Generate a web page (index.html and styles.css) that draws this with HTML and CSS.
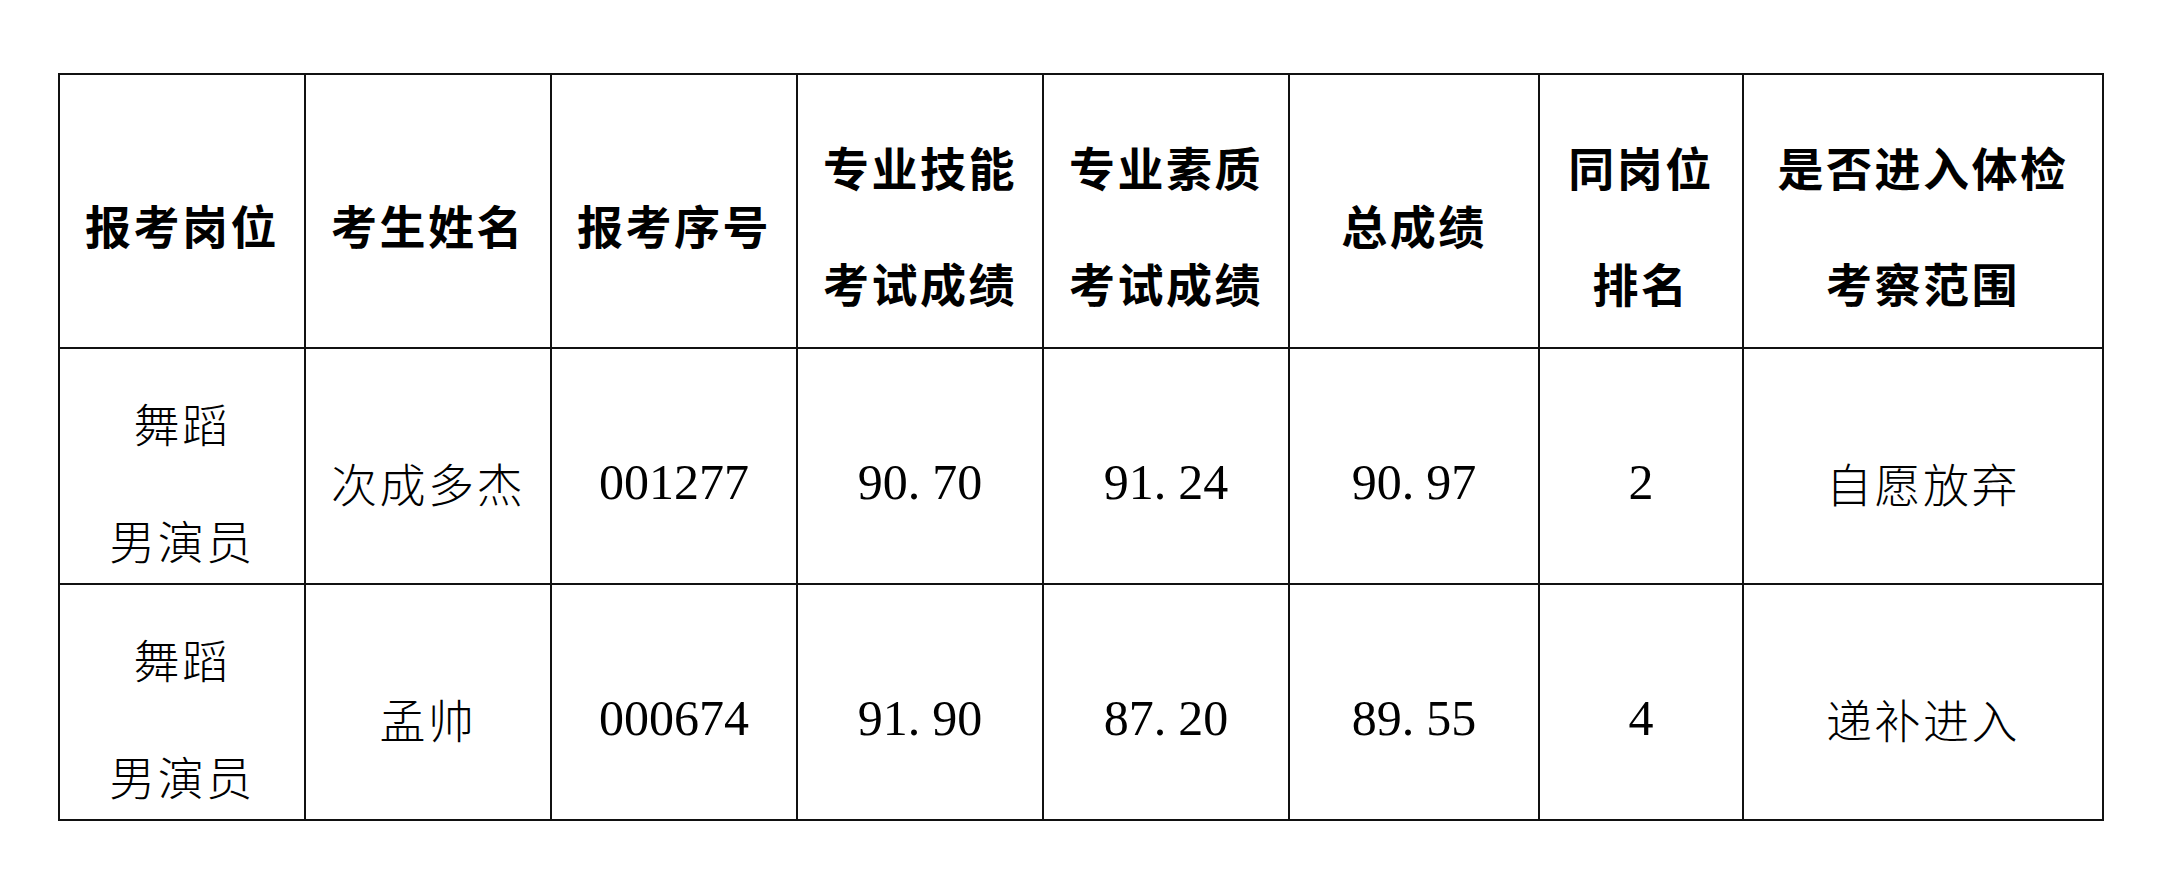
FILE: index.html
```html
<!DOCTYPE html>
<html lang="zh-CN">
<head>
<meta charset="utf-8">
<title>成绩表</title>
<link rel="stylesheet" href="styles.css">
</head>
<body>
<table class="score">
  <colgroup>
    <col class="c1"><col class="c2"><col class="c3"><col class="c4"><col class="c5"><col class="c6"><col class="c7"><col class="c8">
  </colgroup>
  <thead>
    <tr class="head">
      <th><div class="ln">报考岗位</div></th>
      <th><div class="ln">考生姓名</div></th>
      <th><div class="ln">报考序号</div></th>
      <th><div class="ln">专业技能</div><div class="ln">考试成绩</div></th>
      <th><div class="ln">专业素质</div><div class="ln">考试成绩</div></th>
      <th><div class="ln">总成绩</div></th>
      <th><div class="ln">同岗位</div><div class="ln">排名</div></th>
      <th><div class="ln">是否进入体检</div><div class="ln">考察范围</div></th>
    </tr>
  </thead>
  <tbody>
    <tr class="row">
      <td><div class="ln">舞蹈</div><div class="ln">男演员</div></td>
      <td class="one"><div class="ln">次成多杰</div></td>
      <td class="num"><div class="ln">001277</div></td>
      <td class="num"><div class="ln">90<span class="pt">.</span>70</div></td>
      <td class="num"><div class="ln">91<span class="pt">.</span>24</div></td>
      <td class="num"><div class="ln">90<span class="pt">.</span>97</div></td>
      <td class="num"><div class="ln">2</div></td>
      <td class="one"><div class="ln">自愿放弃</div></td>
    </tr>
    <tr class="row">
      <td><div class="ln">舞蹈</div><div class="ln">男演员</div></td>
      <td class="one"><div class="ln">孟帅</div></td>
      <td class="num"><div class="ln">000674</div></td>
      <td class="num"><div class="ln">91<span class="pt">.</span>90</div></td>
      <td class="num"><div class="ln">87<span class="pt">.</span>20</div></td>
      <td class="num"><div class="ln">89<span class="pt">.</span>55</div></td>
      <td class="num"><div class="ln">4</div></td>
      <td class="one"><div class="ln">递补进入</div></td>
    </tr>
  </tbody>
</table>
</body>
</html>
```

FILE: styles.css
```css
html, body {
  margin: 0;
  padding: 0;
  background: #ffffff;
}

body {
  padding: 73px 0 0 58px;
  color: #000000;
  font-family: "Noto Sans CJK SC", "Noto Sans", sans-serif;
}

.score {
  border-collapse: collapse;
  table-layout: fixed;
  width: 2044px;
}

.c1, .c2, .c3, .c4, .c5 { width: 246px; }
.c6 { width: 250px; }
.c7 { width: 204px; }
.c8 { width: 360px; }

.score th,
.score td {
  border: 2px solid #111111;
  padding: 0;
  text-align: center;
  vertical-align: middle;
}

.head th {
  height: 246px;
  padding-top: 26px;
  font-size: 46px;
  font-weight: 700;
  letter-spacing: 2.5px;
}

.row td {
  height: 206px;
  padding-top: 28px;
  font-size: 46px;
  font-weight: 300;
  letter-spacing: 2.5px;
}

.row td.one,
.row td.num {
  height: 202px;
  padding-top: 32px;
}

.ln {
  line-height: 50px;
  white-space: nowrap;
}

.head .ln + .ln { margin-top: 66px; }
.row .ln + .ln { margin-top: 67px; }

.row td.num {
  font-family: "Liberation Serif", serif;
  font-size: 50px;
  font-weight: 400;
  letter-spacing: 0;
}

.pt {
  padding-right: 12px;
}
```
